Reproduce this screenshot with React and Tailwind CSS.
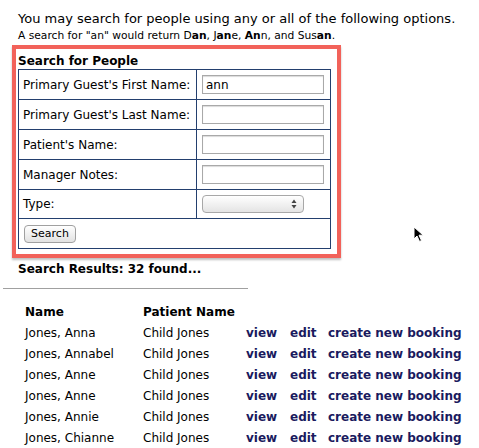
import React from "react"

const rows = [
  ["Jones, Anna", "Child Jones"],
  ["Jones, Annabel", "Child Jones"],
  ["Jones, Anne", "Child Jones"],
  ["Jones, Anne", "Child Jones"],
  ["Jones, Annie", "Child Jones"],
  ["Jones, Chianne", "Child Jones"],
]

const fields = [
  { label: "Primary Guest's First Name:", value: "ann" },
  { label: "Primary Guest's Last Name:", value: "" },
  { label: "Patient's Name:", value: "" },
  { label: "Manager Notes:", value: "" },
]

function Field({ label, value }) {
  return (
    <>
      <div className="h-[30px] border-b border-r border-[#233f6e] flex items-center pl-[4px] text-[12px]">
        {label}
      </div>
      <div className="h-[30px] border-b border-[#233f6e] flex items-center pl-[5px]">
        <input
          defaultValue={value}
          className="w-[122px] h-[19px] border border-[#a9a9a9] shadow-[inset_0_1px_1px_rgba(0,0,0,0.15)] bg-white px-[3px] text-[12px] outline-none"
        />
      </div>
    </>
  )
}

export default function App() {
  return (
    <div className="w-[479px] h-[448px] overflow-hidden bg-white text-black font-['DejaVu_Sans',Verdana,sans-serif] relative">
      <div className="pl-[18px] pt-[11px]">
        <p className="text-[13px] leading-[16px]">
          You may search for people using any or all of the following options.
        </p>
        <p className="text-[10.7px] leading-[13px] mt-[2px]">
          A search for "an" would return D<b>an</b>, J<b>an</b>e, <b>An</b>n, and Sus<b>an</b>.
        </p>
      </div>

      <div className="ml-[12px] mt-[3px] w-[329px] border-4 border-[#f2625a] shadow-[0_2px_2px_rgba(0,0,0,0.25)] pl-[2px] pt-[4px] pb-[5px]">
        <div className="text-[12px] font-bold leading-[16px]">Search for People</div>
        <div className="w-[313px] border border-[#233f6e] grid grid-cols-[178px_1fr]">
          {fields.map((f) => (
            <Field key={f.label} {...f} />
          ))}
          <div className="h-[29px] border-b border-r border-[#233f6e] flex items-center pl-[4px] text-[12px]">
            Type:
          </div>
          <div className="h-[29px] border-b border-[#233f6e] flex items-center pl-[5px]">
            <div className="w-[102px] h-[18px] rounded-[4px] border border-[#a8a8a8] bg-gradient-to-b from-white to-[#e4e4e4] flex items-center justify-end pr-[6px]">
              <svg width="6" height="10" viewBox="0 0 6 10">
                <path d="M3 0.5 L5.5 4 L0.5 4 Z" fill="#444" />
                <path d="M3 9.5 L5.5 6 L0.5 6 Z" fill="#444" />
              </svg>
            </div>
          </div>
          <div className="col-span-2 h-[29px] flex items-center pl-[5px]">
            <button className="w-[52px] h-[18px] rounded-[4px] border border-[#a0a0a0] bg-gradient-to-b from-white to-[#e2e2e2] text-[11px] leading-none text-black">
              Search
            </button>
          </div>
        </div>
      </div>

      <div className="pl-[18px] mt-[4px] text-[12px] font-bold leading-[15px]">
        Search Results: 32 found...
      </div>
      <div className="ml-[3px] mt-[11px] w-[245px] h-px bg-[#a0a0a0]" />

      <div className="pl-[25px] mt-[12px] text-[12px]">
        <div className="grid grid-cols-[118px_103px_44px_38px_1fr] h-[21px] items-center font-bold">
          <span>Name</span>
          <span>Patient Name</span>
        </div>
        {rows.map((r, i) => (
          <div key={i} className="grid grid-cols-[118px_103px_44px_38px_1fr] h-[21px] items-center">
            <span>{r[0]}</span>
            <span>{r[1]}</span>
            <a className="font-bold text-[#1a1a5e]">view</a>
            <a className="font-bold text-[#1a1a5e]">edit</a>
            <a className="font-bold text-[#1a1a5e]">create new booking</a>
          </div>
        ))}
      </div>

      <svg className="absolute left-[413px] top-[226px]" width="12" height="17" viewBox="0 0 12 17">
        <path d="M1 1 L1 13 L4 10 L6.5 15.5 L8.5 14.5 L6 9.2 L10.2 9.2 Z" fill="#000" stroke="#fff" strokeWidth="1" />
      </svg>
    </div>
  )
}
